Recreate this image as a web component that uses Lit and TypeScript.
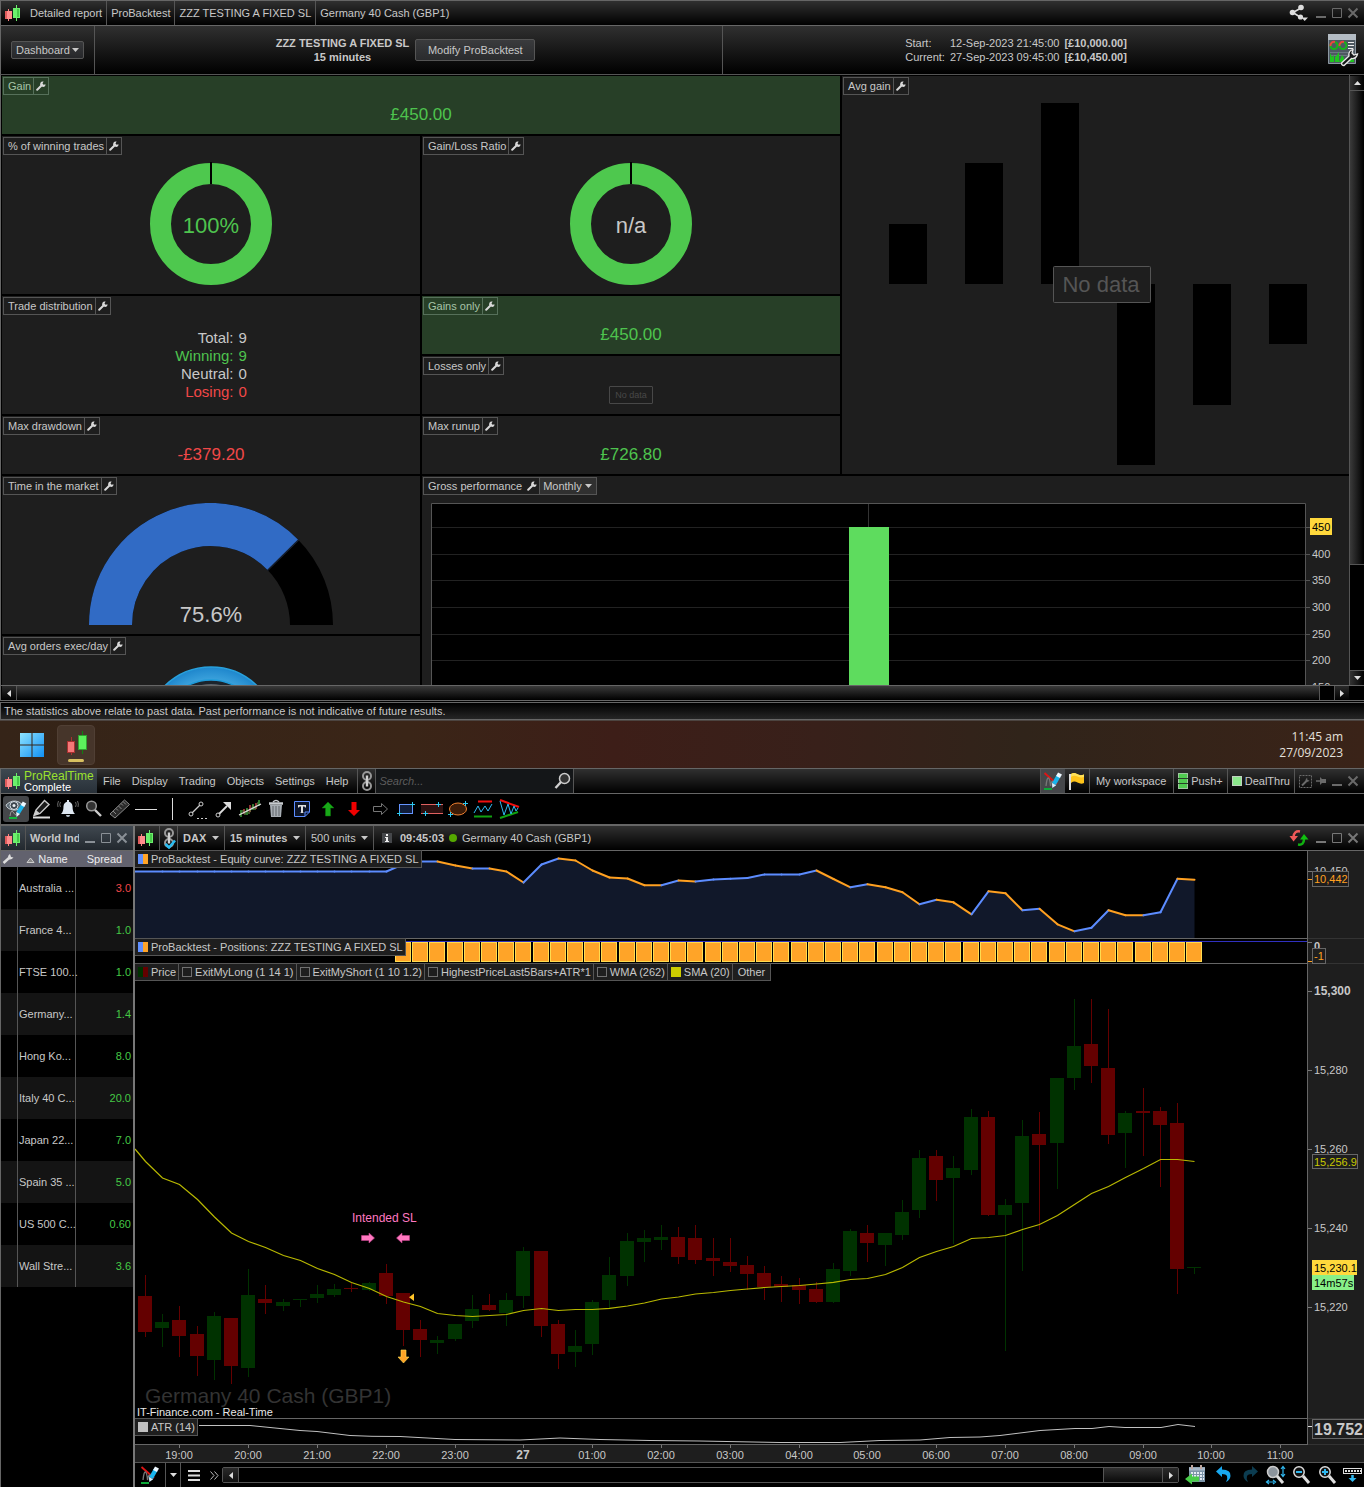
import { LitElement, html, svg, css } from "lit";
import { customElement } from "lit/decorators.js";

/* ---------- shared look ---------- */

const base = css`
  :host {
    display: block;
    color: #c8c8c8;
    font: 11px/14px "Liberation Sans", Arial, sans-serif;
  }
  * { box-sizing: border-box; }
  svg { display: block; flex: none; }
  svg text { font: 11px "Liberation Sans", Arial, sans-serif; fill: #c8c8c8; }
  svg text.strong { font-weight: bold; font-size: 12px; }
  svg text.mid { text-anchor: middle; }
  svg text.dark { fill: #000; }
  svg text.amber { fill: #ffa020; }
  svg text.olive { fill: #c8c800; }
  button, select, input { font: inherit; color: inherit; margin: 0; }
  button {
    display: flex;
    align-items: center;
    justify-content: center;
    padding: 0;
    border: 0;
    background: none;
    white-space: nowrap;
  }
  .bar {
    display: flex;
    align-items: stretch;
    white-space: nowrap;
    background: linear-gradient(#303030, #000);
  }
  .seg {
    display: flex;
    align-items: center;
    padding: 0 4px;
    border-right: 1px solid #555;
  }
  .seg.last { border-right: 0; }
  .grow { flex: 1; min-width: 0; }
  .winbtns { display: flex; flex: none; align-items: center; padding-right: 3px; }
  .winbtns button { width: 16px; height: 20px; }
  .pick { display: grid; align-items: center; }
  .pick > * { grid-area: 1 / 1; }
  .pick select {
    appearance: none;
    border: 0;
    background: transparent;
    padding: 0 12px 0 0;
    outline: 0;
  }
  .pick svg { justify-self: end; pointer-events: none; }
`;

/* ---------- icons ---------- */

const candles = () => svg`<svg width="18" height="18" viewBox="0 0 18 18" shape-rendering="crispEdges">
  <path d="M4.5 5V17" stroke="#ff8080"/><rect x="1" y="7" width="7" height="8" fill="#ff8c8c"/><rect x="1" y="7" width="2" height="8" fill="#e05c5c"/>
  <path d="M12.5 1V17" stroke="#6cf06c"/><rect x="9" y="4" width="7" height="10" fill="#6cf06c"/><rect x="13" y="5" width="2" height="8" fill="#48c848"/></svg>`;

const caret = (c = "#c8c8c8") => svg`<svg width="7" height="4" viewBox="0 0 7 4"><path d="M0 0H7L3.5 4Z" fill="${c}"/></svg>`;
const caretUp = () => svg`<svg width="7" height="4" viewBox="0 0 7 4"><path d="M0 4H7L3.5 0Z" fill="#ddd"/></svg>`;
const caretLeft = () => svg`<svg width="4" height="7" viewBox="0 0 4 7"><path d="M4 0V7L0 3.5Z" fill="#ddd"/></svg>`;
const caretRight = () => svg`<svg width="4" height="7" viewBox="0 0 4 7"><path d="M0 0V7L4 3.5Z" fill="#ddd"/></svg>`;

const wrench = (c = "#d8d8d8") => svg`<svg width="10" height="10" viewBox="0 0 10 10">
  <path d="M1.2 8.8L5 5" stroke="${c}" stroke-width="2" stroke-linecap="round"/>
  <path d="M7.6 .6A2.7 2.7 0 1 0 9.5 3.2L7.6 3.7L6.5 2.4Z" fill="${c}"/></svg>`;

const minIcon = (c: string) => svg`<svg width="12" height="12" viewBox="0 0 12 12"><path d="M1 10H11" stroke="${c}" stroke-width="2"/></svg>`;
const maxIcon = (c: string) => svg`<svg width="12" height="12" viewBox="0 0 12 12"><path d="M1.5 1.5H10.5V10.5H1.5Z" fill="none" stroke="${c}"/></svg>`;
const closeIcon = (c: string) => svg`<svg width="12" height="12" viewBox="0 0 12 12"><path d="M1.5 1.5L10.5 10.5M10.5 1.5L1.5 10.5" stroke="${c}" stroke-width="2"/></svg>`;

const share = () => svg`<svg width="20" height="18" viewBox="0 0 20 18"><path d="M4 8.5L12 4M4 8.5L11 13" stroke="#ddd" stroke-width="1.5"/>
  <circle cx="3.5" cy="8.5" r="2.8" fill="#ddd"/><circle cx="12" cy="3.5" r="2.8" fill="#ddd"/><circle cx="11.5" cy="13" r="2.6" fill="#ddd"/><path d="M12.5 13.5H19L15.7 17Z" fill="#ddd"/></svg>`;

const dashIcon = () => svg`<svg width="32" height="34" viewBox="0 0 32 34">
  <rect x="1" y="1" width="28" height="30" rx="1" fill="#4e5962"/><rect x="1" y="1" width="28" height="6" fill="#b4bcc4"/>
  <path d="M1.5 7V30.5H28.5V7" fill="none" stroke="#8c98a2"/>
  <circle cx="7" cy="12.5" r="3.5" fill="none" stroke="#17b517" stroke-width="2"/><path d="M3.5 13A3.5 3.5 0 0 1 8 9" fill="none" stroke="#f04040" stroke-width="2"/>
  <circle cx="16" cy="12.5" r="3.5" fill="none" stroke="#17b517" stroke-width="2"/><path d="M12.5 13A3.5 3.5 0 0 1 17 9" fill="none" stroke="#f04040" stroke-width="2"/>
  <path d="M21 9.5H27M21 12.5H27M21 15.5H26" stroke="#eee"/>
  <path d="M3 19.5H27M3 22.5H27" stroke="#6c7882"/>
  <path d="M3 29V20L5 24L7 22V29ZM8 29V24L10 22L12 19V29ZM12 29L15 22L17 25V29ZM18 29V26L21 24V29ZM23 29V25L27 27V29Z" fill="#1fc41f"/>
  <path d="M14.5 30L22 23Q21 18 26 16.5L25 20L27 22L30.5 21Q29.500 26 24.5 25.5L17 32.500Q14.500 32.500 14.5 30Z" fill="#16181a" stroke="#e8e8e8" stroke-width="1.300"/></svg>`;

const chain = (check = false) => svg`<svg width="14" height="22" viewBox="0 0 14 22" fill="none">
  <rect x="3" y="2" width="8" height="8" rx="4" stroke="#989898" stroke-width="2"/><rect x="3" y="12" width="8" height="8" rx="4" stroke="#989898" stroke-width="2"/>
  <path d="M7 5.5V16.500" stroke="#d0d0d0" stroke-width="2.400"/>${check ? svg`<path d="M3.5 17L7 20.5L13 13.5" stroke="#2bbcf0" stroke-width="2.600"/>` : ""}</svg>`;

const loupe = () => svg`<svg width="18" height="18" viewBox="0 0 18 18">
  <circle cx="10.500" cy="6.500" r="5" fill="#333" stroke="#ccc" stroke-width="1.500"/><path d="M7 10L1.500 16" stroke="#d0d0d0" stroke-width="2.400"/></svg>`;

const sketch = () => svg`<svg width="20" height="20" viewBox="0 0 20 20" fill="none">
  <path d="M1.5 2L14 13" stroke="#e01414" stroke-width="1.800"/><path d="M3 15Q4 6 5.500 7T7.500 15Q9 8 10 11V15" stroke="#777" stroke-width="1.300"/>
  <path d="M1 18H9" stroke="#0ca838" stroke-width="2"/><path d="M11 13L15.500 5" stroke="#18b4ec" stroke-width="4.500"/>
  <path d="M15 6L17 2.500" stroke="#eef8ff" stroke-width="4.500"/><path d="M9 12L13.200 14.200L9.300 17Z" fill="#d8f0ff"/></svg>`;

const flag = () => svg`<svg width="18" height="20" viewBox="0 0 18 20"><path d="M2 3V19" stroke="#ddd" stroke-width="2"/>
  <path d="M3 3Q6 1 9 3T16 3.500V12Q13 13.500 9.500 11.500T3 12Z" fill="#ffc41a"/><path d="M3 3Q6 1 9 3T16 3.500V6Q13 7 9.500 5.500T3 6Z" fill="#ffe25a"/></svg>`;

const tool = (body: unknown) => svg`<svg width="24" height="24" viewBox="0 0 24 24" fill="none">${body}</svg>`;

const tools: [string, unknown][] = [
  ["Drawing visibility", svg`<path d="M2 8Q8 2 15 5L19 8Q15 14 9 13T2 8Z" fill="#5c6a74" stroke="#c4ccd2"/><circle cx="10" cy="8.500" r="4" fill="#3c464e" stroke="#dde4ea"/><circle cx="10" cy="8.500" r="1.500" fill="#e8eef2"/>
    <path d="M6 19Q7 12 9 15T12 18" stroke="#999"/><path d="M5 21H13" stroke="#12b83c" stroke-width="2"/><path d="M14 16L19 8" stroke="#18b4ec" stroke-width="4"/><path d="M18.500 9L20.500 5.500" stroke="#eef8ff" stroke-width="4"/><path d="M12.200 15L16 17L12.500 20Z" fill="#e0f4ff"/>`],
  ["Pencil", svg`<path d="M3 20.500H20" stroke="#ddd" stroke-width="2"/><path d="M4 18.500L6 13L14.500 3.500L19 7.500L10 16.500Z" fill="#1c1c1c" stroke="#ccc" stroke-width="1.400"/><path d="M4 18.500L6 13L10 16.500Z" fill="#ccc"/>`],
  ["Alerts", svg`<path d="M5 17Q7.500 15 7.500 9Q8 5 12 4.500Q16 5 16.500 9Q16.500 15 19 17Z" fill="#dfe8f2"/><path d="M11 3H13V5H11Z" fill="#dfe8f2"/><path d="M10 18H14Q14 20 12 20T10 18Z" fill="#b8c4d0"/><path d="M4.500 5Q3 7.500 4.500 10M19.500 5Q21 7.500 19.500 10M2.500 4Q1 7 2 10M21.500 4Q23 7 22 10" stroke="#666"/>`],
  ["Magnifier", svg`<circle cx="9.500" cy="9" r="4.800" fill="#333" stroke="#999" stroke-width="1.500"/><path d="M13 13L19 19" stroke="#ccc" stroke-width="2.400"/>`],
  ["Ruler", svg`<path d="M2 17L16.500 3L21.500 7.500L7 21Z" fill="#2a2a2a" stroke="#888"/><path d="M5 14L8 17M8 11.500L10 13.500M10.500 9L13.500 12M13 6.500L15 8.500M15 4.500L18 7.500" stroke="#888"/>`],
  ["Horizontal line", svg`<path d="M1 12.500H23" stroke="#ddd"/>`],
  ["Vertical line", svg`<path d="M12.500 1V23" stroke="#ddd"/>`],
  ["Segment", svg`<path d="M6 16L14 8" stroke="#ccc" stroke-width="1.200"/><circle cx="5" cy="17" r="2" stroke="#ccc"/><circle cx="15" cy="7" r="2" stroke="#ccc"/><path d="M11 21.500H22" stroke="#ccc" stroke-dasharray="2 2"/>`],
  ["Arrow", svg`<path d="M7 17L15 9" stroke="#ddd" stroke-width="1.800"/><circle cx="6" cy="18" r="2" stroke="#ccc"/><path d="M11 5H19V13Z" fill="#ddd"/>`],
  ["Regression", svg`<path d="M3 13V20M9 11V18M15 7V13M21 3V9" stroke="#3aa03a" stroke-width="1.500"/><path d="M6 12V17M12 8V15M18 6V12" stroke="#c04040" stroke-width="1.500"/><path d="M2 19L5 13L7 18L9 12L11 17L15 8L17 13L20 5" stroke="#5a8040" stroke-width=".8"/><path d="M1 18L23 7" stroke="#ddd" stroke-width="1.200"/>`],
  ["Delete", svg`<path d="M6 8H18L17 20H7Z" fill="#a8aeb4"/><path d="M9 9V19M12 9V19M15 9V19" stroke="#606468"/><path d="M5 6.500H19" stroke="#c8ccd0" stroke-width="2.500"/><path d="M9 5Q12 2 15 5" stroke="#c8ccd0" stroke-width="1.500"/>`],
  ["Text", svg`<path d="M4.500 4.500H19.500V15L15 19.500H4.500Z" fill="#0c1428" stroke="#5b8cff"/><path d="M19.500 15H15V19.500" stroke="#5b8cff"/><path d="M8 8H16V10.500H15L14.500 9.500H13V15.500L14.500 16H9.500L11 15.500V9.500H9.500L9 10.500H8Z" fill="#ddd"/>`],
  ["Up arrow", svg`<path d="M12 5L18 11H14.500V19H9.500V11H6Z" fill="#18a818" stroke="#0a7a0a" stroke-width=".5"/>`],
  ["Down arrow", svg`<path d="M12 19L18 13H14.500V5H9.500V13H6Z" fill="#f00000"/>`],
  ["Right arrow", svg`<path d="M5.500 9.500H13.500V6.500L19.500 12L13.500 17.500V14.500H5.500Z" stroke="#777"/>`],
  ["Rectangle", svg`<rect x="5.500" y="7.500" width="13" height="9" fill="#101c38" stroke="#6494ff"/><path d="M16 7.500H21M18.500 5V10M3 16.500H8M5.500 14V19" stroke="#30c8f0"/>`],
  ["Channel", svg`<rect x="1" y="7" width="22" height="9" fill="#2c1010"/><path d="M1 7.500H23M1 16.500H23" stroke="#e06060"/><path d="M16 7.500H21M18.500 5V10M3 16.500H8M5.500 14V19" stroke="#30c8f0"/>`],
  ["Ellipse", svg`<ellipse cx="12" cy="12" rx="8.500" ry="6" fill="#3c1c08" stroke="#f08030"/><path d="M17 6.500H22M19.500 4V9M2 17.500H7M4.500 15V20" stroke="#30c8f0"/>`],
  ["Range pattern", svg`<path d="M6 4.500H20" stroke="#f01010" stroke-width="2"/><path d="M2 19.500H20" stroke="#10a010" stroke-width="2"/><path d="M2 16L6 9L9 15L13 9L16 14L20 7" stroke="#30b8f0"/>`],
  ["Triangle pattern", svg`<path d="M2 3L21 10" stroke="#f01010" stroke-width="2"/><path d="M2 21L20 15" stroke="#10a010" stroke-width="2"/><path d="M2 4L6 18L10 7L13 17L16 9L18 14L20 11" stroke="#30b8f0"/>`],
];

/* ---------- report window ---------- */

const chip = (label: string, extra: unknown = "") => html`<div class="chip">
  <span class="name">${label}</span><button class="tune" aria-label="${label} settings">${wrench()}</button>${extra}</div>`;

const ring = (label: string, tone: string) => html`<svg width="124" height="124" viewBox="0 0 124 124">
  <circle cx="62" cy="62" r="50.500" fill="none" stroke="#4ec84e" stroke-width="21"/>
  <path d="M62 0V22" stroke="#000" stroke-width="2"/>
  <text class="ringtext ${tone}" x="62" y="71">${label}</text></svg>`;

const avgBars = [
  [889, 224, 60], [965, 163, 121], [1041, 103, 181],
  [1117, 284, 181], [1193, 284, 121], [1269, 284, 60],
];

@customElement("report-window")
export class ReportWindow extends LitElement {
  static styles = [base, css`
    .title { height: 26px; border: 1px solid #666; border-width: 1px 0 1px 1px; }
    .title .logo { padding: 0 8px 0 3px; display: flex; align-items: center; }
    .title .seg.first { padding-left: 0; }
    .title .sharebtn { padding-right: 4px; }
    .head {
      display: grid;
      grid-template-columns: 94px 628fr 586fr 55px;
      height: 49px;
      border-left: 1px solid #666;
      border-bottom: 1px solid #555;
      background: linear-gradient(#303030, #000);
    }
    .head > div { display: flex; align-items: center; justify-content: center; gap: 6px; }
    .head > .ruled { border-right: 1px solid #555; }
    .head > .test { padding-right: 6px; }
    .head > .conf { justify-content: flex-end; padding-right: 5px; }
    .pick.box {
      height: 18px;
      padding: 0 4px;
      border: 1px solid #555;
      border-radius: 2px;
      background: linear-gradient(#38393b, #26272a);
    }
    .pick.box select { padding-right: 9px; }
    .strategy { text-align: center; font-weight: bold; line-height: 14px; }
    .modify {
      width: 120px;
      height: 22px;
      border: 1px solid #555;
      border-radius: 2px;
      background: linear-gradient(#3a3b3d, #2a2b2d);
    }
    .dates { display: grid; grid-template-columns: auto auto auto; column-gap: 5px; margin: 0; }
    .dates b { font-weight: bold; }
    .body { display: grid; grid-template-columns: 1fr 15px; border-left: 1px solid #666; background: #000; }
    .view { height: 610px; overflow: hidden; padding: 1px 0 0 1px; }
    .cells {
      display: grid;
      gap: 2px;
      grid-template-columns: 418fr 418fr 507fr;
      grid-template-rows: 58px 158px 58px 58px 58px 158px 158px;
    }
    .cell { display: flex; flex-direction: column; min-width: 0; background: #1e1e1e; padding: 1px 1px 0; overflow: hidden; }
    .cell.green { background: #273f27; }
    .wide { grid-column: span 2; }
    .tall { grid-row: span 2; }
    .avg { grid-column: 3; grid-row: 1 / span 5; padding: 1px 0 0; }
    .gross { grid-column: 2 / span 2; grid-row: 6 / span 2; padding: 1px 0 0; }
    .avg .chip, .gross .chip { margin-left: 1px; }
    .chip {
      display: flex;
      flex: none;
      align-self: flex-start;
      height: 18px;
      margin-bottom: -1px;
      border: 1px solid #555;
      line-height: 16px;
      white-space: nowrap;
    }
    .green .chip { border-color: #56705a; color: #a8c4a8; }
    .chip .name { padding: 0 2px 0 4px; }
    .chip .tune { width: 15px; border-left: 1px solid #555; }
    .gross .chip .tune { border-left: 0; }
    .green .chip .tune { border-color: #56705a; }
    .chip .pick { padding: 0 4px 0 3px; border-left: 1px solid #555; background: #303030; }
    .chip .pick select { padding-right: 10px; }
    .fill { flex: 1; display: flex; align-items: center; justify-content: center; min-height: 0; }
    .top { align-items: flex-start; }
    .money, .count { padding-top: 2px; }
    .money { font-size: 17px; line-height: 20px; color: #4ec44e; }
    .loss { color: #f04848; }
    .gain { color: #4ec44e; }
    svg .ringtext { font-size: 22px; text-anchor: middle; }
    svg .ringtext.gain { fill: #4ec44e; }
    svg text.void { font-size: 22px; fill: #555; text-anchor: middle; }
    .split { display: grid; grid-template-columns: auto auto; column-gap: 5px; margin: 0; font-size: 15px; line-height: 18px; text-align: right; }
    .split dd { margin: 0; }
    .none { border: 1px solid #484848; border-radius: 1px; padding: 0 5px; font-size: 9px; line-height: 16px; color: #484848; }
    .chart { width: 100%; height: auto; }
    .vbar { display: flex; flex-direction: column; border-left: 1px solid #555; padding-top: 1px; }
    .vbar button { height: 14px; background: linear-gradient(90deg, #333, #000); }
    .vbar .thumb { flex: 475; border: 1px solid #555; border-width: 1px 0; background: linear-gradient(90deg, #3a3a3a, #000); }
    .vbar .track { flex: 105; border-bottom: 1px solid #555; }
    .hbar { display: flex; height: 16px; padding: 0 15px 0 1px; border: 1px solid #666; border-width: 1px 0 1px 1px; background: #000; }
    .hbar button { width: 14px; background: linear-gradient(#2a2a2a, #000); }
    .hbar .thumb { flex: 1303; border: 1px solid #555; border-width: 0 1px; background: linear-gradient(#3a3a3a, #000); }
    .hbar .track { flex: 14; border-right: 1px solid #555; }
    .status {
      margin: 1px 0 0;
      height: 18px;
      padding: 0 3px;
      border: 1px solid #666;
      border-width: 1px 0 1px 1px;
      line-height: 16px;
      background: linear-gradient(#000, #262626);
    }
    .wrap { background: #000; }
  `];

  render() {
    return html`<div class="wrap">
      <div class="bar title">
        <span class="logo">${candles()}</span>
        <span class="seg first">Detailed report</span><span class="seg">ProBacktest</span><span class="seg">ZZZ TESTING A FIXED SL</span>
        <span class="seg last grow">Germany 40 Cash (GBP1)</span>
        <button class="sharebtn" aria-label="Share">${share()}</button>
        <div class="winbtns">
          <button aria-label="Minimise">${minIcon("#6a6a6a")}</button><button aria-label="Maximise">${maxIcon("#6a6a6a")}</button><button aria-label="Close">${closeIcon("#6a6a6a")}</button>
        </div>
      </div>
      <div class="head">
        <div class="ruled"><span class="pick box"><select aria-label="View"><option>Dashboard</option></select>${caret()}</span></div>
        <div class="ruled test"><div class="strategy">ZZZ TESTING A FIXED SL<br />15 minutes</div><button class="modify">Modify ProBacktest</button></div>
        <div><div class="dates"><span>Start:</span><span>12-Sep-2023 21:45:00</span><b>[£10,000.00]</b><span>Current:</span><span>27-Sep-2023 09:45:00</span><b>[£10,450.00]</b></div></div>
        <div class="conf"><button aria-label="Configure dashboard">${dashIcon()}</button></div>
      </div>
      <div class="body">
        <div class="view"><div class="cells">
          <section class="cell wide green">${chip("Gain")}<div class="fill money">£450.00</div></section>
          <section class="cell">${chip("% of winning trades")}<div class="fill">${ring("100%", "gain")}</div></section>
          <section class="cell">${chip("Gain/Loss Ratio")}<div class="fill">${ring("n/a", "")}</div></section>
          <section class="cell tall">${chip("Trade distribution")}<div class="fill count"><dl class="split">
            <dt>Total:</dt><dd>9</dd><dt class="gain">Winning:</dt><dd class="gain">9</dd><dt>Neutral:</dt><dd>0</dd><dt class="loss">Losing:</dt><dd class="loss">0</dd></dl></div></section>
          <section class="cell green">${chip("Gains only")}<div class="fill money">£450.00</div></section>
          <section class="cell">${chip("Losses only")}<div class="fill count"><span class="none">No data</span></div></section>
          <section class="cell">${chip("Max drawdown")}<div class="fill money loss">-£379.20</div></section>
          <section class="cell">${chip("Max runup")}<div class="fill money">£726.80</div></section>
          <section class="cell">${chip("Time in the market")}<div class="fill">
            <svg width="244" height="122" viewBox="0 0 244 122">
              <path d="M21.500 122A100.500 100.500 0 0 1 222.500 122" fill="none" stroke="#000" stroke-width="43"/>
              <path d="M21.500 122A100.500 100.500 0 0 1 194.300 52.200" fill="none" stroke="#316bc5" stroke-width="43"/>
              <path d="M178.500 67.500L210.500 36" stroke="#141c2a" stroke-width="1.500"/>
              <text class="ringtext" x="122" y="119">75.6%</text></svg></div></section>
          <section class="cell">${chip("Avg orders exec/day")}<div class="fill top">
            <svg width="140" height="140" viewBox="0 0 140 140">
              <defs><radialGradient id="blue"><stop offset=".7" stop-color="#4ab0e4"/><stop offset="1" stop-color="#1e86cc"/></radialGradient></defs>
              <circle cx="70" cy="79" r="66" fill="url(#blue)" stroke="#28a0dc" stroke-width="1.500"/>
              <circle cx="70" cy="76" r="50" fill="#1c242c" stroke="#1e9ad8" stroke-width="1.500"/><circle cx="70" cy="76" r="46" fill="#59626a"/></svg></div></section>
          <section class="cell avg">${chip("Avg gain")}
            <svg class="chart" viewBox="842 94 507 380">
              ${avgBars.map(([x, y, h]) => svg`<rect x="${x}" y="${y}" width="38" height="${h}"/>`)}
              <rect x="1053.500" y="266.500" width="97" height="36" rx="1" fill="#1e1e1e" stroke="#555"/>
              <text class="void" x="1101" y="292">No data</text></svg></section>
          <section class="cell gross">${chip("Gross performance", html`<span class="pick"><select aria-label="Period"><option>Monthly</option></select>${caret()}</span>`)}
            <svg class="chart" viewBox="422 494 927 301">
              <path d="M431.500 795V503.500H1305.500V795" stroke="#555"/>
              <path d="M868.500 504V527M1306 527.500H1310" stroke="#333"/>
              ${[527, 554, 580, 607, 634, 660, 687].map((y, i) => svg`<path d="M432 ${y + 0.5}H1305" stroke="#222"/><path d="M1306 ${y + 0.5}H1310" stroke="#555"/>
                ${i ? svg`<text x="1312" y="${y + 4}">${450 - i * 50}</text>` : ""}`)}
              <rect x="849" y="527" width="40" height="268" fill="#5edc5e"/>
              <rect x="1310" y="518" width="22" height="17" fill="#ffd83c"/><text class="dark" x="1312" y="531">450</text></svg></section>
        </div></div>
        <div class="vbar"><button aria-label="Scroll up">${caretUp()}</button><div class="thumb"></div><div class="track"></div><button aria-label="Scroll down">${caret("#ddd")}</button></div>
      </div>
      <div class="hbar"><button aria-label="Scroll left">${caretLeft()}</button><div class="thumb"></div><div class="track"></div><button aria-label="Scroll right">${caretRight()}</button></div>
      <p class="status">The statistics above relate to past data. Past performance is not indicative of future results.</p>
    </div>`;
  }
}

/* ---------- desktop task bar ---------- */

@customElement("task-bar")
export class TaskBar extends LitElement {
  static styles = [base, css`
    .tasks {
      display: flex;
      align-items: center;
      height: 48px;
      padding: 0 21px 0 13px;
      border-top: 1px solid #4c4440;
      background: linear-gradient(90deg, #352418, #3a2517 30%, #3d1e18 45%, #38201a 60%, #30241a 75%, #3a2318);
      color: #e4e0dc;
    }
    .tasks button { width: 38px; height: 40px; border-radius: 4px; margin-right: 6px; }
    .tasks .active { background: #46352a; border: 1px solid #503f34; }
    .clock { margin-left: auto; text-align: right; font: 12px/16px "Open Sans", "Noto Sans", sans-serif; }
  `];
  render() {
    return html`<div class="tasks">
      <button aria-label="Start"><svg width="24" height="24" viewBox="0 0 24 24"><defs><linearGradient id="w" x2="1" y2="1"><stop stop-color="#8fe4ff"/><stop offset="1" stop-color="#1090f4"/></linearGradient></defs>
        <path d="M0 0H11.500V11.500H0ZM12.500 0H24V11.500H12.500ZM0 12.500H11.500V24H0ZM12.500 12.500H24V24H12.500Z" fill="url(#w)"/></svg></button>
      <button class="active" aria-label="ProRealTime"><svg width="26" height="36" viewBox="0 0 26 36">
        <path d="M8.500 10V28" stroke="#a83030"/><rect x="4.500" y="14.500" width="7" height="11" fill="#f47878" stroke="#a83030"/>
        <path d="M19.500 4V27" stroke="#108010"/><rect x="15.500" y="8.500" width="8" height="14" fill="#5cf05c" stroke="#30a030"/>
        <rect x="5" y="32" width="16" height="3" rx="1.500" fill="#d8c060"/></svg></button>
      <div class="clock">11:45 am<br />27/09/2023</div></div>`;
  }
}

/* ---------- platform menu and tools ---------- */

@customElement("main-menu")
export class MainMenu extends LitElement {
  static styles = [base, css`
    .menu { height: 26px; border: 1px solid #666; border-width: 1px 0 1px 1px; }
    .brand { display: flex; align-items: center; gap: 2px; width: 96px; padding-left: 3px; background: linear-gradient(#3e4850, #283038); color: #fff; line-height: 10px; }
    .brand b { display: block; font-size: 12px; line-height: 11px; font-weight: normal; color: #9be22d; }
    .menu .item { padding: 0 5px 0 6px; }
    .chainbtn { width: 19px; margin-left: 4px; border: 1px solid #555; border-width: 0 1px; }
    .search { display: flex; align-items: center; width: 198px; border-right: 1px solid #555; background: #141618; }
    .search input { flex: 1; min-width: 0; border: 0; padding: 0 3px; background: none; outline: 0; font-style: italic; }
    .search input::placeholder { color: #5c5c5c; }
    .search button { padding-right: 1px; }
    .right { display: flex; margin-left: auto; }
    .right > button { border-left: 1px solid #555; padding: 0 4px; gap: 3px; }
    .right > .on { background: #45474a; padding: 0 2px; }
    .right > .flag { border: 0; padding: 0 3px; }
    .right > .ws { padding: 0 7px 0 6px; }
    .right > .winbtns { border-left: 1px solid #555; padding-left: 2px; }
    .tools { display: flex; align-items: center; height: 32px; padding: 0 2px; border: solid #666; border-width: 0 0 2px 1px; background: #000; }
    .tools button { width: 26px; height: 26px; }
    .tools .on { background: #45474a; border-radius: 3px; }
  `];
  render() {
    return html`<div class="bar menu">
        <div class="brand">${candles()}<span><b>ProRealTime</b>Complete</span></div>
        ${["File", "Display", "Trading", "Objects", "Settings", "Help"].map((t) => html`<button class="item">${t}</button>`)}
        <button class="chainbtn" aria-label="Link">${chain()}</button>
        <div class="search"><input type="text" aria-label="Search" placeholder="Search..." /><button aria-label="Run search">${loupe()}</button></div>
        <div class="right">
          <button class="on" aria-label="Drawing tools">${sketch()}</button><button class="flag" aria-label="Flag">${flag()}</button>
          <button class="ws">My workspace</button>
          <button><svg width="10" height="16" viewBox="0 0 10 16"><rect x=".5" y=".5" width="9" height="15" fill="#50cc50" stroke="#a0c8a0"/><path d="M0 5.500H10M0 10.500H10" stroke="#284028"/></svg>Push+</button>
          <button><svg width="10" height="10" viewBox="0 0 10 10"><rect x=".5" y=".5" width="9" height="9" fill="#8ce88c" stroke="#c0d0c0"/></svg>DealThru</button>
          <div class="winbtns">
            <button aria-label="Customise"><svg width="13" height="13" viewBox="0 0 13 13"><rect x=".5" y=".5" width="12" height="12" fill="none" stroke="#6a6a6a" stroke-dasharray="2 1"/><path d="M3 10.500L8 5.500" stroke="#6a6a6a" stroke-width="2"/><path d="M8 2.500Q6 4.500 7 6.500Q9 7.500 10.500 5.500L8.500 5Z" fill="#6a6a6a"/></svg></button>
            <button aria-label="Pin"><svg width="12" height="12" viewBox="0 0 12 12"><path d="M1 6H6" stroke="#6a6a6a" stroke-width="1.500"/><path d="M5 2V10L7 8H11V4H7Z" fill="#6a6a6a"/></svg></button>
            <button aria-label="Minimise">${minIcon("#6a6a6a")}</button><button aria-label="Close">${closeIcon("#6a6a6a")}</button></div>
        </div>
      </div>
      <div class="tools">${tools.map(([name, body], i) => html`<button class="${i ? "" : "on"}" aria-label="${name}">${tool(body)}</button>`)}</div>`;
  }
}

/* ---------- market list ---------- */

const markets = [
  ["Australia ...", "3.0"], ["France 4...", "1.0"], ["FTSE 100...", "1.0"], ["Germany...", "1.4"], ["Hong Ko...", "8.0"],
  ["Italy 40 C...", "20.0"], ["Japan 22...", "7.0"], ["Spain 35 ...", "5.0"], ["US 500 C...", "0.60"], ["Wall Stre...", "3.6"],
];

@customElement("market-list")
export class MarketList extends LitElement {
  static styles = [base, css`
    :host { min-width: 0; border-left: 1px solid #666; background: #000; }
    .title { height: 25px; border-bottom: 1px solid #666; background: linear-gradient(#404850, #22282e); }
    .title .seg.logo { padding: 0 3px; }
    .name { flex: 1; min-width: 0; overflow: hidden; margin-right: 3px; padding-left: 4px; font-weight: bold; line-height: 24px; }
    table { width: 100%; table-layout: fixed; border-collapse: separate; border-spacing: 0; }
    .c1 { width: 17px; }
    .c2 { width: 58px; }
    th { height: 16px; padding: 0; font-weight: normal; line-height: 16px; background: #62626e; color: #eee; }
    th button { height: 16px; }
    th .sort { display: inline-block; margin-right: 3px; }
    td { height: 42px; padding: 0 0 0 1px; border-right: 1px solid #555; white-space: nowrap; }
    td:last-child { border-right: 0; padding-right: 2px; text-align: right; color: #45c945; }
    td.hot:last-child { color: #f04848; }
    tr:nth-child(even) td { background: #141414; }
  `];
  render() {
    return html`<div class="bar title"><span class="seg logo">${candles()}</span><span class="name">World Indices</span>
        <div class="winbtns"><button aria-label="Minimise">${minIcon("#8a9096")}</button><button aria-label="Maximise">${maxIcon("#8a9096")}</button><button aria-label="Close">${closeIcon("#8a9096")}</button></div></div>
      <table><colgroup><col class="c1" /><col class="c2" /><col /></colgroup>
        <thead><tr><th><button aria-label="Columns">${svg`<svg width="14" height="12" viewBox="0 0 14 12"><path d="M2.500 10L8 5" stroke="#ddd" stroke-width="2.500"/><path d="M9 1Q6 3 7.500 6Q10 7.500 12.500 4.500L10 4Z" fill="#ddd"/></svg>`}</button></th>
          <th><svg class="sort" width="9" height="6" viewBox="0 0 9 6"><path d="M1 5.500L4.500 1L8 5.500Z" fill="#888" stroke="#ccc"/></svg>Name</th><th>Spread</th></tr></thead>
        <tbody>${markets.map(([n, s], i) => html`<tr><td></td><td>${n}</td><td class="${i ? "" : "hot"}">${s}</td></tr>`)}</tbody></table>`;
  }
}

/* ---------- price chart ---------- */

/* direction, high, low, body top, body bottom */
type Candle = [0 | 1, number, number, number, number];
const bars: Candle[] = [
  [0, 1275, 1337, 1296, 1332], [1, 1314, 1347, 1322, 1328], [0, 1306, 1357, 1320, 1336], [0, 1326, 1376, 1334, 1356],
  [1, 1312, 1380, 1316, 1360], [0, 1318, 1384, 1318, 1366], [1, 1269, 1377, 1295, 1368], [0, 1285, 1314, 1299, 1303],
  [1, 1299, 1311, 1302, 1306], [1, 1299, 1307, 1299, 1300], [1, 1285, 1303, 1294, 1298], [1, 1284, 1297, 1289, 1295],
  [0, 1283, 1292, 1288, 1289], [1, 1282, 1291, 1283, 1290], [0, 1264, 1304, 1273, 1296], [0, 1293, 1346, 1293, 1330],
  [0, 1320, 1357, 1329, 1340], [1, 1336, 1354, 1340, 1343], [1, 1324, 1341, 1324, 1339], [1, 1295, 1328, 1309, 1321],
  [0, 1294, 1311, 1305, 1310], [1, 1293, 1326, 1300, 1313], [1, 1247, 1308, 1251, 1296], [0, 1251, 1337, 1251, 1326],
  [0, 1320, 1369, 1324, 1354], [1, 1330, 1367, 1346, 1352], [1, 1300, 1355, 1302, 1344], [1, 1257, 1308, 1275, 1300],
  [1, 1233, 1286, 1241, 1276], [1, 1230, 1262, 1238, 1242], [1, 1225, 1250, 1237, 1240], [0, 1227, 1264, 1237, 1257],
  [0, 1225, 1264, 1238, 1260], [0, 1238, 1276, 1258, 1261], [0, 1238, 1272, 1262, 1266], [0, 1256, 1290, 1265, 1274],
  [0, 1266, 1300, 1273, 1287], [0, 1276, 1302, 1284, 1287], [0, 1278, 1304, 1285, 1290], [0, 1282, 1303, 1289, 1302],
  [1, 1263, 1303, 1269, 1302], [1, 1229, 1276, 1231, 1271], [0, 1225, 1262, 1233, 1243], [1, 1233, 1266, 1233, 1245],
  [1, 1200, 1240, 1212, 1235], [1, 1150, 1218, 1158, 1210], [0, 1150, 1201, 1156, 1180], [1, 1156, 1244, 1168, 1178],
  [1, 1109, 1175, 1117, 1170], [0, 1111, 1216, 1117, 1215], [1, 1199, 1351, 1205, 1215], [1, 1120, 1271, 1136, 1203],
  [0, 1112, 1230, 1134, 1145], [1, 1078, 1189, 1078, 1143], [1, 999, 1090, 1046, 1078], [0, 999, 1083, 1044, 1066],
  [0, 1009, 1144, 1068, 1135], [1, 1111, 1168, 1113, 1133], [0, 1088, 1156, 1111, 1113], [0, 1107, 1187, 1111, 1125],
  [0, 1103, 1294, 1123, 1269], [1, 1267, 1274, 1267, 1268],
];

const average = [
  1161.5, 1178, 1184.5, 1199.5, 1217, 1233, 1241.5, 1247.5, 1255.5, 1260.5, 1268.5, 1274.5, 1282.5, 1288.5, 1296.5, 1302,
  1306.5, 1313.5, 1315.5, 1316.5, 1315.5, 1314.5, 1310.5, 1308.5, 1310.5, 1309.5, 1309.5, 1308.3, 1306, 1303, 1299, 1297,
  1294, 1292.5, 1290.5, 1289, 1287.5, 1286.5, 1285.5, 1284, 1282.3, 1279.5, 1278.5, 1274.5, 1267.5, 1257.5, 1251.5, 1246.5,
  1238.5, 1237.5, 1235.5, 1229.5, 1224.5, 1215.5, 1204.5, 1193.5, 1186.5, 1177.5, 1168.5, 1159.5, 1159.5, 1161.5,
];

const equity = [
  ...new Array(15).fill(871.5), 864, 861.5, 861.5, 865.5, 868.5, 868.5, 871.5, 882.5, 864.5, 858.5, 860.5, 870.5, 877.5,
  878.5, 885.3, 885.3, 880.5, 881.5, 879.5, 878.8, 878, 874.5, 874.5, 874.5, 870.5, 879, 887.3, 884.3, 887.3, 892.3, 904.3,
  899.7, 902.3, 914.3, 891.3, 893.3, 910.3, 908.7, 924.3, 931.3, 927.7, 910.3, 915.3, 915.3, 912.3, 878.7, 879.7,
];
const idle = new Set([30, 58]);

const atr = "199,1425.5 250,1425.5 300,1430.5 317,1431.5 350,1435.5 372,1436.3 400,1436.5 455,1439.5 520,1440 560,1438 600,1439.5 650,1440.5 700,1441 780,1442.5 840,1442.5 880,1440.5 920,1440 950,1437.5 980,1437 1000,1435.5 1040,1430.5 1075,1428.5 1092,1428.5 1109,1426.5 1125,1427.5 1161,1427.5 1178,1424.5 1195,1426.5";

const hours = ["19:00", "20:00", "21:00", "22:00", "23:00", "27", "01:00", "02:00", "03:00", "04:00", "05:00", "06:00", "07:00", "08:00", "09:00", "10:00", "11:00"];

const barX = (k: number) => Math.floor(145.5 + 17.2 * k);

const axis = (top: number, bottom: number) => svg`<rect x="1308" y="${top}" width="56" height="${bottom - top}" fill="#1e1e1e"/>
  <path d="M1307.500 ${top}V${bottom}M135 ${bottom - 0.5}H1308" stroke="#666"/><path d="M1308 ${bottom - 0.5}H1364" stroke="#333"/>`;

const tag = (y: number, w: number, h: number, text: string, tone: string, fill = "#1e1e1e", edge = "#666") => svg`
  <rect x="1312.500" y="${y + 0.5}" width="${w}" height="${h}" fill="${fill}" stroke="${edge}"/><text class="${tone}" x="1314" y="${y + 12}">${text}</text>`;

@customElement("chart-window")
export class ChartWindow extends LitElement {
  static styles = [base, css`
    :host { background: #000; }
    .title { height: 25px; border-bottom: 1px solid #666; }
    .title .seg { padding: 0 5px; }
    .title .seg.logo { padding: 0 4px 0 2px; }
    .title .seg.link { padding: 0 1px 0 2px; }
    .title .seg.feed { gap: 5px; padding-left: 8px; }
    .feed .info { margin-right: 3px; }
    .strong select, .feed b { font-weight: bold; }
    .refresh { padding-right: 3px; }
    .panel { position: relative; }
    .panel > svg { width: 100%; height: auto; }
    .legend { position: absolute; top: -1px; left: 0; display: flex; border: 1px solid #555; border-left: 0; background: #1e1e1e; line-height: 16px; white-space: nowrap; }
    .legend label, .legend span { display: flex; align-items: center; gap: 3px; padding: 0 2px 0 3px; }
    .legend > * + * { border-left: 1px solid #555; }
    .legend i { width: 10px; height: 10px; background: linear-gradient(90deg, #6090ff 50%, #ffa428 50%); }
    .legend i.price { background: linear-gradient(90deg, #003200 50%, #640000 50%); }
    .legend i.grey { background: #c0c0c0; }
    .legend input { appearance: none; width: 10px; height: 10px; border: 1px solid #707070; }
    .legend input:checked { background: #cccc00; border-color: #cccc00; }
    .legend .other { padding: 0 5px; }
    .foot { display: flex; align-items: center; height: 24px; }
    .foot > button { height: 24px; }
    .foot .pen { width: 31px; border-right: 1px solid #555; }
    .foot .drop { width: 15px; border-right: 1px solid #555; }
    .foot .list { width: 25px; }
    .foot .more { width: 16px; }
    .scroll { flex: 1; display: flex; height: 16px; border: 1px solid #555; border-radius: 2px; }
    .scroll button { width: 15px; background: linear-gradient(#2a2a2a, #111); }
    .scroll .track { flex: 866; border-left: 1px solid #555; }
    .scroll .thumb { flex: 58; border: 1px solid #555; border-width: 0 1px; background: linear-gradient(#303030, #0a0a0a); }
    .acts { display: flex; padding-left: 5px; }
    .acts button { width: 26px; }
    .acts button:last-child { width: 24px; }
    svg text.watermark { font-size: 21px; fill: #333; }
    svg text.note { font-size: 12px; fill: #ff78c0; }
    svg text.source { fill: #e8e8e8; }
    svg text.zero { font-weight: bold; }
    svg text.big { font-size: 16px; font-weight: bold; }
  `];

  render() {
    const n = bars.length;
    const xs = Array.from({ length: n }, (_, k) => barX(k) + 0.5);
    const eq = equity.map((y, k) => `${k ? xs[k] : 135},${y}`);
    return html`
      <div class="bar title">
        <span class="seg logo">${candles()}</span><span class="seg link">${chain(true)}</span>
        <span class="seg strong"><span class="pick"><select aria-label="Instrument"><option>DAX</option></select>${caret()}</span></span>
        <span class="seg strong"><span class="pick"><select aria-label="Timeframe"><option>15 minutes</option></select>${caret()}</span></span>
        <span class="seg"><span class="pick"><select aria-label="Units"><option>500 units</option></select>${caret()}</span></span>
        <span class="seg last feed grow"><svg class="info" width="10" height="10" viewBox="0 0 10 10"><rect width="10" height="10" fill="#45474a"/><path d="M4 1H6V3H4ZM3 4H6V8H7V9H3V8H4V5H3Z" fill="#eee"/></svg><b>09:45:03</b>
          <svg width="8" height="8" viewBox="0 0 8 8"><circle cx="4" cy="4" r="4" fill="#55a800"/></svg>Germany 40 Cash (GBP1)</span>
        <button class="refresh" aria-label="Refresh"><svg width="22" height="20" viewBox="0 0 22 20" fill="none"><path d="M12 3.500Q6 2.500 5.500 9" stroke="#f05858" stroke-width="2.500"/><path d="M1.500 8H10L5.500 13.500Z" fill="#f05858"/><path d="M10 16.500Q16 17.500 16 11" stroke="#10b010" stroke-width="2.500"/><path d="M12 11.500H20.500L16 6Z" fill="#10c010"/></svg></button>
        <div class="winbtns"><button aria-label="Minimise">${minIcon("#777")}</button><button aria-label="Maximise">${maxIcon("#777")}</button><button aria-label="Close">${closeIcon("#777")}</button></div>
      </div>

      <div class="panel">
        <svg viewBox="135 851 1229 88">
          <polygon points="${eq.join(" ")} 1194.5,938 135,938" fill="#11182a"/>
          ${eq.slice(1).map((p, i) => {
            const k = i + 1;
            const down = equity[k] > equity[i] || idle.has(k);
            return svg`<path d="M${eq[i]}L${p}" stroke="${down ? "#ffa020" : "#5c8cff"}" stroke-width="2" stroke-linecap="round"/>`;
          })}
          ${axis(851, 939)}
          <path d="M1308 871.500H1312" stroke="#777"/><text x="1314" y="875">10,450</text>
          ${tag(871, 36, 15, "10,442", "amber")}<path d="M1308 879.500H1312" stroke="#ffa020"/></svg>
        <div class="legend"><span><i></i>ProBacktest - Equity curve: ZZZ TESTING A FIXED SL</span></div>
      </div>

      <div class="panel">
        <svg viewBox="135 939 1229 25">
          <path d="M395 941.500H1308" stroke="#3030c0"/>
          ${Array.from({ length: 47 }, (_, k) => svg`<rect x="${barX(k + 15) - 7.5}" y="942.500" width="15" height="19" fill="#ffa428" stroke="#ffdc50"/>`)}
          ${axis(939, 964)}
          <path d="M1308 942.500H1312" stroke="#777"/><text class="zero" x="1314" y="950">0</text>
          ${tag(948, 13, 15, "-1", "amber")}<path d="M1308 961.500H1312" stroke="#ffa020"/></svg>
        <div class="legend"><span><i></i>ProBacktest - Positions: ZZZ TESTING A FIXED SL</span></div>
      </div>

      <div class="panel">
        <svg viewBox="135 964 1229 455">
          <text class="watermark" x="145" y="1403">Germany 40 Cash (GBP1)</text>
          <g shape-rendering="crispEdges">${bars.map(([up, hi, lo, top, bottom], k) => {
            const x = barX(k);
            return svg`<path d="M${x} ${hi}H${x + 1}V${lo}H${x}ZM${x - 7} ${top}H${x + 7}V${bottom}H${x - 7}Z" fill="${up ? "#003200" : "#640000"}"/>`;
          })}</g>
          <polyline points="135,1149 ${average.map((y, k) => `${xs[k]},${y}`).join(" ")}" fill="none" stroke="#b8b800" stroke-width="1.200"/>
          <text class="note" x="352" y="1222">Intended SL</text>
          <path d="M361.500 1235.500H369V1233L374.500 1238L369 1243V1240.500H361.500ZM409.500 1235.500H402V1233L396.500 1238L402 1243V1240.500H409.500Z" fill="#ff78c0" stroke="#c04088" stroke-width=".6"/>
          <path d="M401 1350H406V1357H409L403.500 1363L398 1357H401Z" fill="#ffa428" stroke="#ffdc50" stroke-width=".6"/>
          <path d="M414 1293.500V1301L409 1297.200Z" fill="#ffc428"/>
          <text class="source" x="137" y="1416">IT-Finance.com - Real-Time</text>
          ${axis(964, 1419)}
          ${[0, 1, 2, 3, 4].map((i) => svg`<path d="M1308 ${991.5 + 79 * i}H1312" stroke="#777"/><text class="${i ? "" : "strong"}" x="1314" y="${995 + 79 * i}">15,${300 - i * 20}</text>`)}
          ${tag(1154, 45, 14, "15,256.9", "olive")}
          ${tag(1260, 44, 14, "15,230.1", "dark", "#ffd83c", "#ffd83c")}
          ${tag(1275, 41, 14, "14m57s", "dark", "#88f088", "#88f088")}</svg>
        <div class="legend"><span><i class="price"></i>Price</span><label><input type="checkbox" />ExitMyLong (1 14 1)</label><label><input type="checkbox" />ExitMyShort (1 10 1.2)</label><label><input type="checkbox" />HighestPriceLast5Bars+ATR*1</label><label><input type="checkbox" />WMA (262)</label><label><input type="checkbox" checked />SMA (20)</label><span class="other">Other</span></div>
      </div>

      <div class="panel">
        <svg viewBox="135 1419 1229 26">
          <polyline points="${atr}" fill="none" stroke="#c0c0c0"/>
          ${axis(1419, 1445)}
          <path d="M1308 1426.500H1312" stroke="#ddd"/><rect x="1312.500" y="1419.500" width="52" height="19" fill="#1e1e1e" stroke="#666"/><text class="big" x="1314" y="1435">19.752</text></svg>
        <div class="legend"><span><i class="grey"></i>ATR (14)</span></div>
      </div>

      <div class="panel">
        <svg viewBox="135 1445 1229 18">
          <rect x="135" y="1445" width="1229" height="18" fill="#1e1e1e"/><path d="M135 1462.500H1364" stroke="#555"/>
          ${hours.map((t, i) => {
            const x = barX(2 + i * 4);
            return svg`<path d="M${x + 0.5} 1445V1448" stroke="#777"/><text class="mid ${t === "27" ? "strong" : ""}" x="${x}" y="1459">${t}</text>`;
          })}</svg>
      </div>

      <div class="foot">
        <button class="pen" aria-label="Draw">${sketch()}</button><button class="drop" aria-label="Drawing options">${caret("#ddd")}</button>
        <button class="list" aria-label="List"><svg width="12" height="11" viewBox="0 0 12 11"><path d="M0 1H12M0 5.500H12M0 10H12" stroke="#ddd" stroke-width="2"/></svg></button>
        <button class="more" aria-label="More"><svg width="9" height="9" viewBox="0 0 9 9"><path d="M.5 .5L4 4.500L.5 8.500M4.500 .5L8 4.500L4.500 8.500" stroke="#bbb" fill="none"/></svg></button>
        <div class="scroll"><button aria-label="Scroll left">${caretLeft()}</button><div class="track"></div><div class="thumb"></div><button aria-label="Scroll right">${caretRight()}</button></div>
        <div class="acts">
          <button aria-label="Go to date">${tool(svg`<rect x="4" y="4" width="16" height="15" fill="#7c94a8"/><path d="M4 6H20" stroke="#a8b8c8" stroke-width="3"/><path d="M6 10H19M6 13H19M6 16H19" stroke="#e4ecf4" stroke-width="2" stroke-dasharray="2 1"/><path d="M7 2V6M16 2V6" stroke="#c0a8a0" stroke-width="2"/><path d="M0 16L7 10.500V13.500H14V18.500H7V21.500Z" fill="#48cc48"/>`)}</button>
          <button aria-label="Undo">${tool(svg`<path d="M5 8.500L11 3V6.500Q20 6.500 19.500 13Q19 17 15 19Q17 16 16 13Q15 11 11 11V14Z" fill="#18a8f0"/>`)}</button>
          <button aria-label="Redo">${tool(svg`<path d="M21 8.500L15 3V6.500Q6 6.500 6.500 13Q7 17 11 19Q9 16 10 13Q11 11 15 11V14Z" fill="#0c3c50"/>`)}</button>
          <button aria-label="Fit">${tool(svg`<circle cx="10" cy="9" r="5.500" fill="#8c949c" stroke="#ccc" stroke-width="1.500"/><path d="M14 13L20 20" stroke="#ddd" stroke-width="3"/><path d="M20 4V13M18 6L20 3.500L22 6M18 11L20 13.500L22 11M4 19H11M6 17L3.500 19L6 21M10 17L12.500 19L10 21" stroke="#30b8f0" stroke-width="1.200"/>`)}</button>
          <button aria-label="Zoom out">${tool(svg`<circle cx="10" cy="9" r="5.200" fill="#111" stroke="#ddd" stroke-width="1.500"/><path d="M14 13L20 20" stroke="#ddd" stroke-width="3"/><path d="M7 9H13" stroke="#30b8f0" stroke-width="2"/>`)}</button>
          <button aria-label="Zoom in">${tool(svg`<circle cx="10" cy="9" r="5.200" fill="#111" stroke="#ddd" stroke-width="1.500"/><path d="M14 13L20 20" stroke="#ddd" stroke-width="3"/><path d="M7 9H13M10 6V12" stroke="#30b8f0" stroke-width="2"/>`)}</button>
          <button aria-label="Data window">${tool(svg`<rect x="3.500" y="5.500" width="18" height="5" stroke="#ddd"/><path d="M5 8H21" stroke="#ddd" stroke-width="2" stroke-dasharray="2 1"/><path d="M12.500 12V16" stroke="#30b8f0" stroke-width="2.500"/><path d="M8.500 15H16.500L12.500 19Z" fill="#30b8f0"/>`)}</button>
        </div>
      </div>`;
  }
}

@customElement("app-root")
export class AppRoot extends LitElement {
  static styles = css`
    :host { display: block; background: #000; }
    .work { display: grid; grid-template-columns: 133px 1fr; background: #000; }
    .main { min-width: 0; border-left: 2px solid #777; }
  `;
  render() {
    return html`<report-window></report-window><task-bar></task-bar><main-menu></main-menu>
      <div class="work"><market-list></market-list><chart-window class="main"></chart-window></div>`;
  }
}
